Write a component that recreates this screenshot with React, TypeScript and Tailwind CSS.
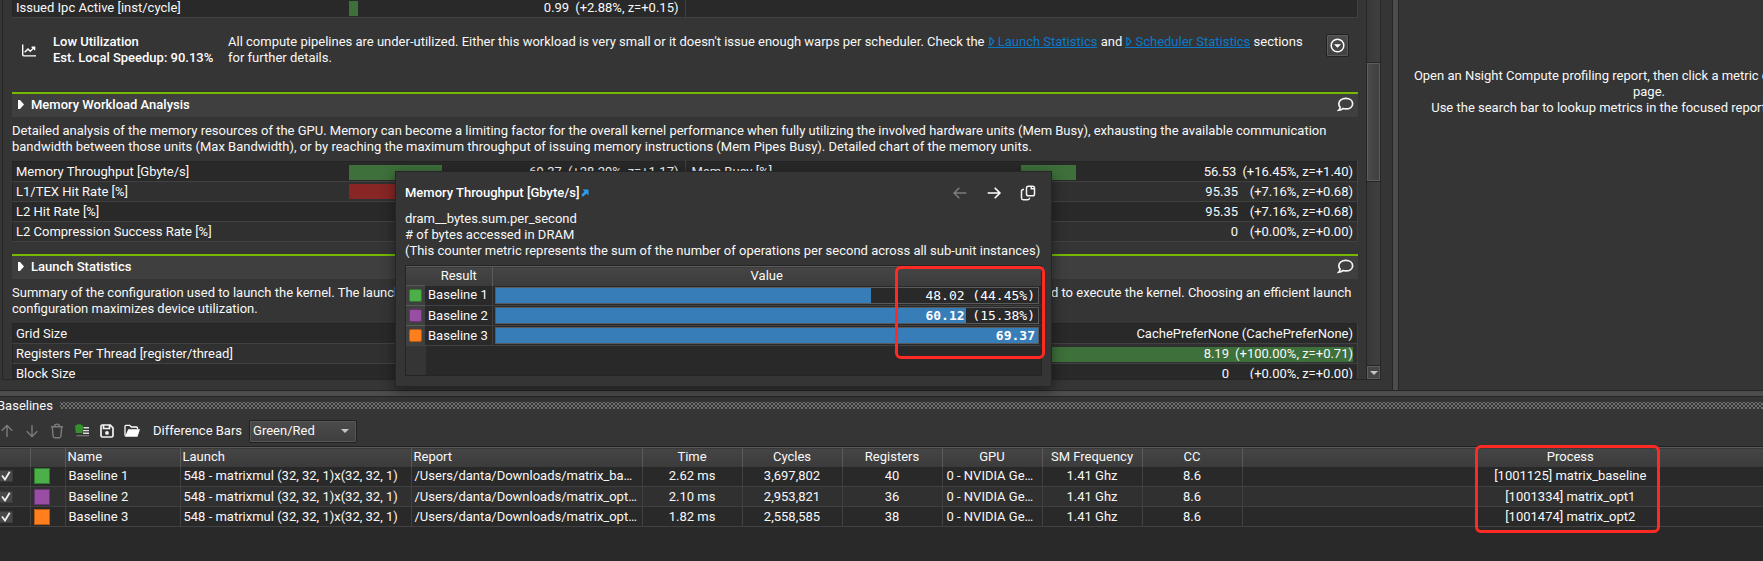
import React from "react";

type Metric = { label: string; value?: string; delta?: string; fill?: number; tone?: "green" | "red" };

const BLANK: Metric = { label: "" };

function Bar({ m }: { m: Metric }) {
  return (
    <div className="grid h-[15px] items-center">
      {m.fill ? (
        <div
          className={`col-start-1 row-start-1 h-[15px] ${m.tone === "red" ? "bg-[#882626]" : "bg-[#3e703b]"}`}
          style={{ width: `${m.fill}%` }}
        />
      ) : null}
      <div className="z-0 col-start-1 row-start-1 flex justify-end whitespace-pre leading-4">
        <span>{m.value}</span>
        {m.delta ? <span className="min-w-[108px] pl-[6px] text-right">{m.delta}</span> : null}
      </div>
    </div>
  );
}

function MetricTable({ rows, wide }: { rows: [Metric, Metric][]; wide?: boolean }) {
  return (
    <table
      className={`w-full table-fixed border-collapse border border-[#252525] bg-[#292929] ${wide ? "[&_span+span]:min-w-[124px]" : "[&_td:last-child_span+span]:min-w-[115px] [&_td:nth-child(2)_span+span]:min-w-[108px]"}`}
    >
      <tbody>
        {rows.map(([a, b], i) => (
          <tr key={i} className="h-5 border-b border-[#414141] odd:bg-[#292929] even:bg-[#303030]">
            <th scope="row" className="py-0 pl-[3px] text-left font-normal leading-4">{a.label}</th>
            <td className="border-r border-[#414141] py-0 pr-[6px]"><Bar m={a} /></td>
            <th scope="row" className="py-0 pl-[6px] text-left font-normal leading-4">{b.label}</th>
            <td className="border-r border-[#414141] py-0 pr-1"><Bar m={b} /></td>
          </tr>
        ))}
      </tbody>
    </table>
  );
}

function CommentIcon() {
  return (
    <svg className="h-[17px] w-[17px]" viewBox="0 0 16 16" fill="none" stroke="#f4f4f4" strokeWidth="1.6">
      <path d="M8.3 2.2c3.7 0 6.4 2.1 6.4 5s-2.7 5-6.4 5c-1 0-1.900-.1-2.700-.4-1 .9-2.300 1.500-4 1.600.9-1 1.300-1.900 1.300-2.900C2.100 9.600 1.700 8.500 1.700 7.200c0-2.900 2.900-5 6.600-5z" />
    </svg>
  );
}

function SectionHeader({ title }: { title: string }) {
  return (
    <div className="flex h-[25px] items-center border-t-2 border-[#76b900] bg-[#3f3f3f] pb-[2px] pl-[6px] pr-1">
      <button aria-label={`Expand ${title}`} className="w-[13px]">
        <svg className="h-[9px] w-[7px]" viewBox="0 0 7 9"><path d="M0 0h2l4 4.500-4 4.500H0z" fill="#fff" /></svg>
      </button>
      <h2 className="flex-1 font-medium text-white">{title}</h2>
      <button aria-label={`Comment on ${title}`}><CommentIcon /></button>
    </div>
  );
}

function SectionLink({ children }: { children: string }) {
  return (
    <a href="#section" className="bg-[linear-gradient(#0a79cb,#0a79cb)] bg-[length:100%_1px] bg-[position:0_92%] bg-no-repeat pl-px text-[#0a79cb]">
      <svg className="mr-[3px] inline h-[9px] w-[6px] align-baseline" viewBox="0 0 6 9" fill="none" stroke="#0a79cb" strokeWidth="1.300"><path d="M.8.8h1l3 3.700-3 3.700h-1z" /></svg>
      {children}
    </a>
  );
}

const ipc: [Metric, Metric][] = [
  [{ label: "Issued Ipc Active [inst/cycle]", value: "0.99", delta: "(+2.88%, z=+0.15)", fill: 2.88 }, BLANK],
];
const memory: [Metric, Metric][] = [
  [
    { label: "Memory Throughput [Gbyte/s]", value: "69.37", delta: "(+28.29%, z=+1.17)", fill: 28.29 },
    { label: "Mem Busy [%]", value: "56.53", delta: "(+16.45%, z=+1.40)", fill: 16.45 },
  ],
  [{ label: "L1/TEX Hit Rate [%]", fill: 30, tone: "red" }, { label: "", value: "95.35", delta: "(+7.16%, z=+0.68)" }],
  [{ label: "L2 Hit Rate [%]" }, { label: "", value: "95.35", delta: "(+7.16%, z=+0.68)" }],
  [{ label: "L2 Compression Success Rate [%]" }, { label: "", value: "0", delta: "(+0.00%, z=+0.00)" }],
];
const launch: [Metric, Metric][] = [
  [{ label: "Grid Size" }, { label: "", value: "CachePreferNone (CachePreferNone)" }],
  [{ label: "Registers Per Thread [register/thread]" }, { label: "", value: "8.19", delta: "(+100.00%, z=+0.71)", fill: 100 }],
  [{ label: "Block Size" }, { label: "", value: "0", delta: "(+0.00%, z=+0.00)" }],
];

const baselines = [
  { name: "Baseline 1", swatch: "bg-[#4daf4a] border-[#2f7a2d]", report: "/Users/danta/Downloads/matrix_baseline.ncu-rep", time: "2.62 ms", cycles: "3,697,802", regs: "40", process: "[1001125] matrix_baseline", value: "48.02", delta: " (44.45%)", fill: 69.22 },
  { name: "Baseline 2", swatch: "bg-[#984ea3] border-[#6b3275]", report: "/Users/danta/Downloads/matrix_opt1.ncu-rep", time: "2.10 ms", cycles: "2,953,821", regs: "36", process: "[1001334] matrix_opt1", value: "60.12", delta: " (15.38%)", fill: 86.67 },
  { name: "Baseline 3", swatch: "bg-[#ff7f1e] border-[#b85a10]", report: "/Users/danta/Downloads/matrix_opt2.ncu-rep", time: "1.82 ms", cycles: "2,558,585", regs: "38", process: "[1001474] matrix_opt2", value: "69.37", delta: "", fill: 100 },
];

function Popup() {
  return (
    <div role="tooltip" className="absolute left-[395px] top-[171px] z-10 w-[657px] border border-[#262626] bg-[#353535] px-[9px] pb-[10px] pt-[12px] shadow-[0_3px_12px_rgba(0,0,0,0.45)]">
      <div className="flex h-[18px] items-center">
        <h3 className="font-medium text-white">Memory Throughput [Gbyte/s]</h3>
        <svg className="ml-[2px] h-2 w-2" viewBox="0 0 8 8"><path d="M1.500.5H7.500V6.500L5.600 4.600 2 7.800.3 6 3.500 2.500z" fill="#2b9df0" /></svg>
        <div className="ml-auto flex items-center gap-[18px] pr-[6px]">
          <button aria-label="Back">
            <svg className="h-4 w-4" viewBox="0 0 16 16" fill="none" stroke="#7c7c7c" strokeWidth="1.500"><path d="M14.300 8H2.300M7.300 2.700 2.100 8l5.200 5.300" /></svg>
          </button>
          <button aria-label="Forward">
            <svg className="h-4 w-4" viewBox="0 0 16 16" fill="none" stroke="#fff" strokeWidth="1.600"><path d="M1.700 8h12M8.700 2.700 13.900 8l-5.200 5.300" /></svg>
          </button>
          <button aria-label="Copy">
            <svg className="h-4 w-4" viewBox="0 0 16 16" fill="none" stroke="#f4f4f4" strokeWidth="1.500"><rect x="6.500" y="1.200" width="8" height="9.600" rx="1.800" /><path d="M11.300 1.200v2.500h3.200M4 4.600H3.200c-1 0-1.700.7-1.700 1.700v6.800c0 1 .7 1.700 1.700 1.700h4.600c1 0 1.700-.7 1.700-1.700v-.3" /></svg>
          </button>
        </div>
      </div>
      <p className="mt-[9px] whitespace-nowrap leading-4">dram__bytes.sum.per_second<br /># of bytes accessed in DRAM<br />(This counter metric represents the sum of the number of operations per second across all sub-unit instances)</p>
      <div className="mt-[6px] border border-[#252525] bg-[#292929]">
        <table className="w-full table-fixed border-collapse">
          <colgroup><col className="w-[19px]" /><col className="w-[67px]" /><col /></colgroup>
          <thead>
            <tr className="h-[19px] border-t border-[#5a5a5a] bg-linear-to-b from-[#454545] to-[#3b3b3b]">
              <th colSpan={2} className="border-r border-[#5a5a5a] p-0 pl-[20px] font-normal leading-4">Result</th>
              <th className="p-0 font-normal leading-4">Value</th>
            </tr>
          </thead>
          <tbody>
            {baselines.map((b) => (
              <tr key={b.name} className="h-5 border-b border-[#414141]">
                <td className="border-t border-[#5a5a5a] bg-[#404040] p-0"><div className={`mx-auto h-[13px] w-[13px] rounded-xs border ${b.swatch}`} /></td>
                <td className="border-r border-[#414141] p-0 pl-[3px] leading-4">{b.name}</td>
                <td className="p-0 px-[2px]">
                  <div className="grid h-[17px] items-center border border-[#5a5a5a] bg-[#292929]">
                    <div className="col-start-1 row-start-1 h-[15px] bg-[#377eb8]" style={{ width: `${b.fill}%` }} />
                    <div className="z-0 col-start-1 row-start-1 whitespace-pre pr-[3px] text-right font-['DejaVu_Sans_Mono',monospace] leading-[15px] text-white">
                      <span className={b.fill > 80 ? "font-bold" : ""}>{b.value}</span>{b.delta}
                    </div>
                  </div>
                </td>
              </tr>
            ))}
          </tbody>
        </table>
        <div className="h-[29px] w-[20px] bg-[#353535]" />
      </div>
      <div className="pointer-events-none absolute left-[499px] top-[94px] h-[93px] w-[150px] rounded-md border-3 border-[#fe2a23]" />
    </div>
  );
}

function ReportPane() {
  return (
    <main className="relative flex min-w-0 flex-1 flex-col border-r border-[#262626] bg-[#353535] pb-[10px]">
      <div className="ml-[2px] mr-[11px] flex min-h-0 flex-1 border-b border-l border-[#262626]">
        <div className="min-w-0 flex-1 overflow-hidden pl-[9px] pr-2">
          <div className="-mt-[3px]"><MetricTable rows={ipc} /></div>
          <section className="flex h-[74px] items-start pt-4">
            <svg className="ml-[9px] mt-[9px] h-4 w-4 shrink-0" viewBox="0 0 16 16" fill="none" stroke="#fff" strokeWidth="1.400"><path d="M1.700 1.500v10.300c0 .7.400 1.100 1.100 1.100H15M3.700 9.300 7 5.900l2.200 2.300 4-3.700M13.600 7.300V4.200h-3" /></svg>
            <p className="ml-4 w-[175px] shrink-0 whitespace-nowrap font-medium leading-4 text-white">Low Utilization<br />Est. Local Speedup: 90.13%</p>
            <p className="flex-1 leading-4">All compute pipelines are under-utilized. Either this workload is very small or it doesn't issue enough warps per scheduler. Check the <SectionLink>Launch Statistics</SectionLink> and <SectionLink>Scheduler Statistics</SectionLink> sections for further details.</p>
            <button aria-label="Show rule details" className="ml-[10px] mr-[9px] flex h-[23px] w-[23px] shrink-0 items-center justify-center rounded-xs border border-[#222] bg-linear-to-b from-[#4c4c4c] to-[#404040] shadow-[inset_0_0_0_1px_#5a5a5a]">
              <svg className="h-[15px] w-[15px]" viewBox="0 0 15 15"><circle cx="7.500" cy="7.500" r="6.300" fill="none" stroke="#fff" strokeWidth="1.500" /><path d="M4 6.200h7L7.500 9.800z" fill="#fff" /></svg>
            </button>
          </section>
          <section className="pb-3">
            <SectionHeader title="Memory Workload Analysis" />
            <p className="py-[6px] leading-4">Detailed analysis of the memory resources of the GPU. Memory can become a limiting factor for the overall kernel performance when fully utilizing the involved hardware units (Mem Busy), exhausting the available communication bandwidth between those units (Max Bandwidth), or by reaching the maximum throughput of issuing memory instructions (Mem Pipes Busy). Detailed chart of the memory units.</p>
            <MetricTable rows={memory} />
          </section>
          <section>
            <SectionHeader title="Launch Statistics" />
            <p className="py-[6px] leading-4">Summary of the configuration used to launch the kernel. The launch configuration defines the size of the kernel grid, the division of the grid into blocks, and the GPU resources needed to execute the kernel. Choosing an efficient launch configuration maximizes device utilization.</p>
            <MetricTable rows={launch} wide />
          </section>
        </div>
        <div className="flex w-[15px] shrink-0 flex-col border-x border-[#262626] bg-linear-to-r from-[#383838] to-[#404040]">
          <div className="h-[63px] border-b border-[#262626]" />
          <div className="h-[118px] border border-[#5c5c5c] bg-linear-to-r from-[#4a4a4a] to-[#404040]" />
          <div className="flex-1 border-y border-[#262626]" />
          <button aria-label="Scroll down" className="flex h-[13px] items-center justify-center border border-[#5c5c5c] bg-[#454545]">
            <svg className="h-1 w-2" viewBox="0 0 8 4"><path d="M0 0h8L4 4z" fill="#c4c4c4" /></svg>
          </button>
        </div>
      </div>
      <Popup />
    </main>
  );
}

const TOOL = "flex h-[18px] w-[25px] shrink-0 items-center justify-center";

function Toolbar() {
  return (
    <div className="flex h-[32px] items-center pt-[2px]">
      <div className="-ml-[6px] flex">
        <button aria-label="Move up" className={TOOL}><svg className="h-4 w-4" viewBox="0 0 16 16" fill="none" stroke="#7c7c7c" strokeWidth="1.400"><path d="M8 14V2.500M2.700 7.700 8 2.400l5.300 5.300" /></svg></button>
        <button aria-label="Move down" className={TOOL}><svg className="h-4 w-4" viewBox="0 0 16 16" fill="none" stroke="#7c7c7c" strokeWidth="1.400"><path d="M8 2v11.500M2.700 8.300 8 13.600l5.300-5.300" /></svg></button>
        <button aria-label="Delete" className={TOOL}><svg className="h-4 w-4" viewBox="0 0 16 16" fill="none" stroke="#7c7c7c" strokeWidth="1.400"><path d="M2 3.800h12M5.500 3.500c0-1.600.8-2.400 2.500-2.400s2.500.8 2.500 2.400M3.300 4l.8 9.300c.1 1 .7 1.500 1.600 1.500h4.600c.9 0 1.500-.5 1.600-1.500l.8-9.300" /></svg></button>
        <button aria-label="Clear all" className={TOOL}><svg className="h-4 w-4" viewBox="0 0 16 16"><path d="M1 2.200h8v1.300l-.5 6.500H1.700L1.200 3.500H1zM3 1.200h4v1H3z" fill="#35902f" /><path d="M9.500 4.700H15M9 7.600H15M9 10.300H15" stroke="#ddd" strokeWidth="1.400" /><path d="M2.500 12.700H15" stroke="#777" strokeWidth="1.200" /></svg></button>
        <button aria-label="Save" className={TOOL}><svg className="h-4 w-4" viewBox="0 0 16 16" fill="none" stroke="#f4f4f4" strokeWidth="1.700"><path d="M3.300 2h7.900L14 4.800v7.700c0 1-.5 1.500-1.500 1.500h-9C2.500 14 2 13.500 2 12.500v-9C2 2.500 2.400 2 3.300 2zM4.500 2.300v3.200h6V2.300" /><circle cx="8" cy="9.900" r="1.900" fill="#f4f4f4" stroke="none" /></svg></button>
        <button aria-label="Open" className={TOOL}><svg className="h-4 w-4" viewBox="0 0 16 16"><path d="M1 12.800V3.300c0-.6.400-1 1-1h3.700L7.400 4h5.100c.6 0 1 .4 1 1v1.200" fill="none" stroke="#fff" strokeWidth="1.300" /><path d="M4.200 6.300H16l-2.500 7.500H.9z" fill="#fff" /></svg></button>
      </div>
      <label htmlFor="diff-bars" className="ml-[9px] whitespace-nowrap">Difference Bars</label>
      <div className="ml-[7px] grid items-center">
        <select id="diff-bars" className="col-start-1 row-start-1 h-[23px] w-[108px] appearance-none rounded-xs border border-[#222] bg-linear-to-b from-[#4b4b4b] to-[#3f3f3f] pl-[3px] shadow-[inset_0_0_0_1px_#565656] outline-none">
          <option>Green/Red</option>
        </select>
        <svg className="pointer-events-none z-0 col-start-1 row-start-1 mr-2 h-1 w-2 justify-self-end" viewBox="0 0 8 4"><path d="M0 0h8L4 4z" fill="#c4c4c4" /></svg>
      </div>
    </div>
  );
}

const CELL = "overflow-hidden text-ellipsis whitespace-nowrap border-r border-[#414141] p-0 px-1 text-center leading-4";
const LEFT = "overflow-hidden text-ellipsis whitespace-nowrap border-r border-[#414141] py-0 pr-1 pl-[3px] text-left leading-4";
const HEAD = "border-r border-[#5a5a5a] p-0 text-center font-normal leading-4";
const HEAD_LEFT = "border-r border-[#5a5a5a] p-0 pl-[2px] text-left font-normal leading-4";

function BaselinesTable() {
  return (
    <div className="relative flex-1 overflow-hidden border-t border-[#222] bg-[#292929]">
      <table className="w-[calc(100%+136px)] table-fixed border-collapse">
        <colgroup>
          <col className="w-[30px]" /><col className="w-[35px]" /><col className="w-[115px]" /><col className="w-[231px]" /><col className="w-[231px]" />
          <col className="w-[100px]" /><col className="w-[100px]" /><col className="w-[100px]" /><col className="w-[100px]" /><col className="w-[100px]" /><col className="w-[100px]" /><col />
        </colgroup>
        <thead>
          <tr className="h-[19px] border-t border-[#5a5a5a] bg-linear-to-b from-[#454545] to-[#3b3b3b]">
            <th className={HEAD} aria-label="Enabled" /><th className={HEAD} aria-label="Color" />
            <th className={HEAD_LEFT}>Name</th><th className={HEAD_LEFT}>Launch</th><th className={HEAD_LEFT}>Report</th>
            <th className={HEAD}>Time</th><th className={HEAD}>Cycles</th><th className={HEAD}>Registers</th><th className={HEAD}>GPU</th>
            <th className={HEAD}>SM Frequency</th><th className={HEAD}>CC</th><th className={HEAD}>Process</th>
          </tr>
        </thead>
        <tbody>
          {baselines.map((b) => (
            <tr key={b.name} className="h-5 border-b border-[#414141] even:bg-[#303030]">
              <td className="border-r border-[#414141] p-0">
                <label className="-ml-px grid h-3 w-[14px] items-center">
                  <input type="checkbox" defaultChecked aria-label={b.name} className="peer col-start-1 row-start-1 h-3 w-[14px] appearance-none border border-[#3a3a3a] bg-[#484848]" />
                  <svg className="pointer-events-none z-0 col-start-1 row-start-1 mx-auto hidden h-[10px] w-[10px] peer-checked:block" viewBox="0 0 10 10" fill="none" stroke="#f0f0f0" strokeWidth="1.800"><path d="M1 4.500 4 8.500 8.700.8" /></svg>
                </label>
              </td>
              <td className="border-r border-[#414141] p-0 pl-[3px]"><div className={`h-4 w-4 border ${b.swatch}`} /></td>
              <td className={LEFT}>{b.name}</td>
              <td className={LEFT}>548 - matrixmul (32, 32, 1)x(32, 32, 1)</td>
              <td className={LEFT}>{b.report}</td>
              <td className={CELL}>{b.time}</td>
              <td className={CELL}>{b.cycles}</td>
              <td className={CELL}>{b.regs}</td>
              <td className={CELL}>0 - NVIDIA GeForce RTX 3090</td>
              <td className={CELL}>1.41 Ghz</td>
              <td className={CELL}>8.6</td>
              <td className={CELL}>{b.process}</td>
            </tr>
          ))}
        </tbody>
      </table>
    </div>
  );
}

export default function App() {
  return (
    <div className="flex h-screen flex-col overflow-hidden bg-[#353535] font-[Roboto,sans-serif] text-[13px] leading-4 text-[#f8f8f8]">
      <div className="flex min-h-0 flex-1 bg-[#4c4c4c]">
        <ReportPane />
        <aside className="ml-[5px] flex w-[365px] shrink-0 items-start overflow-hidden border-l border-[#262626] bg-[#353535] pt-[68px]">
          <p className="w-[calc(100%+136px)] shrink-0 text-center">Open an Nsight Compute profiling report, then click a metric on the Details or Raw<br />page.<br />Use the search bar to lookup metrics in the focused report and all its pages.</p>
        </aside>
      </div>
      <div className="h-[7px] shrink-0 border-y border-[#262626] bg-[#4c4c4c]" />
      <section className="relative flex h-[164px] shrink-0 flex-col">
        <div className="flex h-[17px] items-center">
          <h2 className="-ml-[3px] w-[63px]">Baselines</h2>
          <div className="h-[7px] flex-1 bg-[radial-gradient(circle,#6e6e6e_0.8px,transparent_1px),radial-gradient(circle,#6e6e6e_0.8px,transparent_1px)] bg-[length:4px_4px] bg-[position:0_0,2px_2px]" />
        </div>
        <Toolbar />
        <BaselinesTable />
        <div className="pointer-events-none absolute left-[1475px] top-[48px] h-[88px] w-[185px] rounded-md border-3 border-[#fe2a23]" />
      </section>
    </div>
  );
}
